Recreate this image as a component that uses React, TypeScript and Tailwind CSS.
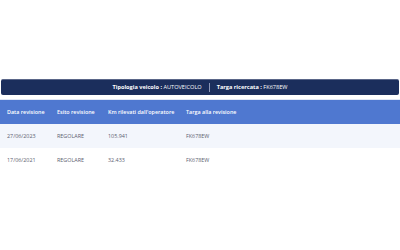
import React from "react";

export default function App() {
  const rows = [
    { data: "27/06/2023", esito: "REGOLARE", km: "105.941", targa: "FK678EW" },
    { data: "17/06/2021", esito: "REGOLARE", km: "32.433", targa: "FK678EW" },
  ];

  return (
    <div
      className="w-[400px] h-[250px] bg-white pt-[79px]"
      style={{ fontFamily: "'Open Sans', 'Liberation Sans', sans-serif" }}
    >
      {/* Search summary */}
      <div className="mx-[1px] h-[16px] bg-[#1b2e5c] border-t border-[#5a6688] rounded-[2px] flex items-center justify-center text-white text-[5.6px]">
        <span>
          <span className="font-bold">Tipologia veicolo :</span> AUTOVEICOLO
        </span>
        <span className="mx-[7px] w-px h-[9px] bg-[#8c97b8]" />
        <span>
          <span className="font-bold">Targa ricercata :</span> FK678EW
        </span>
      </div>

      {/* Revisions table */}
      <div className="mt-[4px] border-t border-[#dfe6f5]">
        <div className="h-[24px] bg-[#4f78d0] grid grid-cols-[50px_51px_78px_1fr] items-center pl-[7px] text-white text-[5.4px] font-semibold">
          <span>Data revisione</span>
          <span>Esito revisione</span>
          <span>Km rilevati dall'operatore</span>
          <span>Targa alla revisione</span>
        </div>
        {rows.map((r, i) => (
          <div
            key={i}
            className={`h-[24px] grid grid-cols-[50px_51px_78px_1fr] items-center pl-[7px] text-[#5b6070] text-[5.4px] ${
              i % 2 === 0 ? "bg-[#f3f6fc]" : "bg-white"
            }`}
          >
            <span>{r.data}</span>
            <span>{r.esito}</span>
            <span>{r.km}</span>
            <span>{r.targa}</span>
          </div>
        ))}
      </div>
    </div>
  );
}
